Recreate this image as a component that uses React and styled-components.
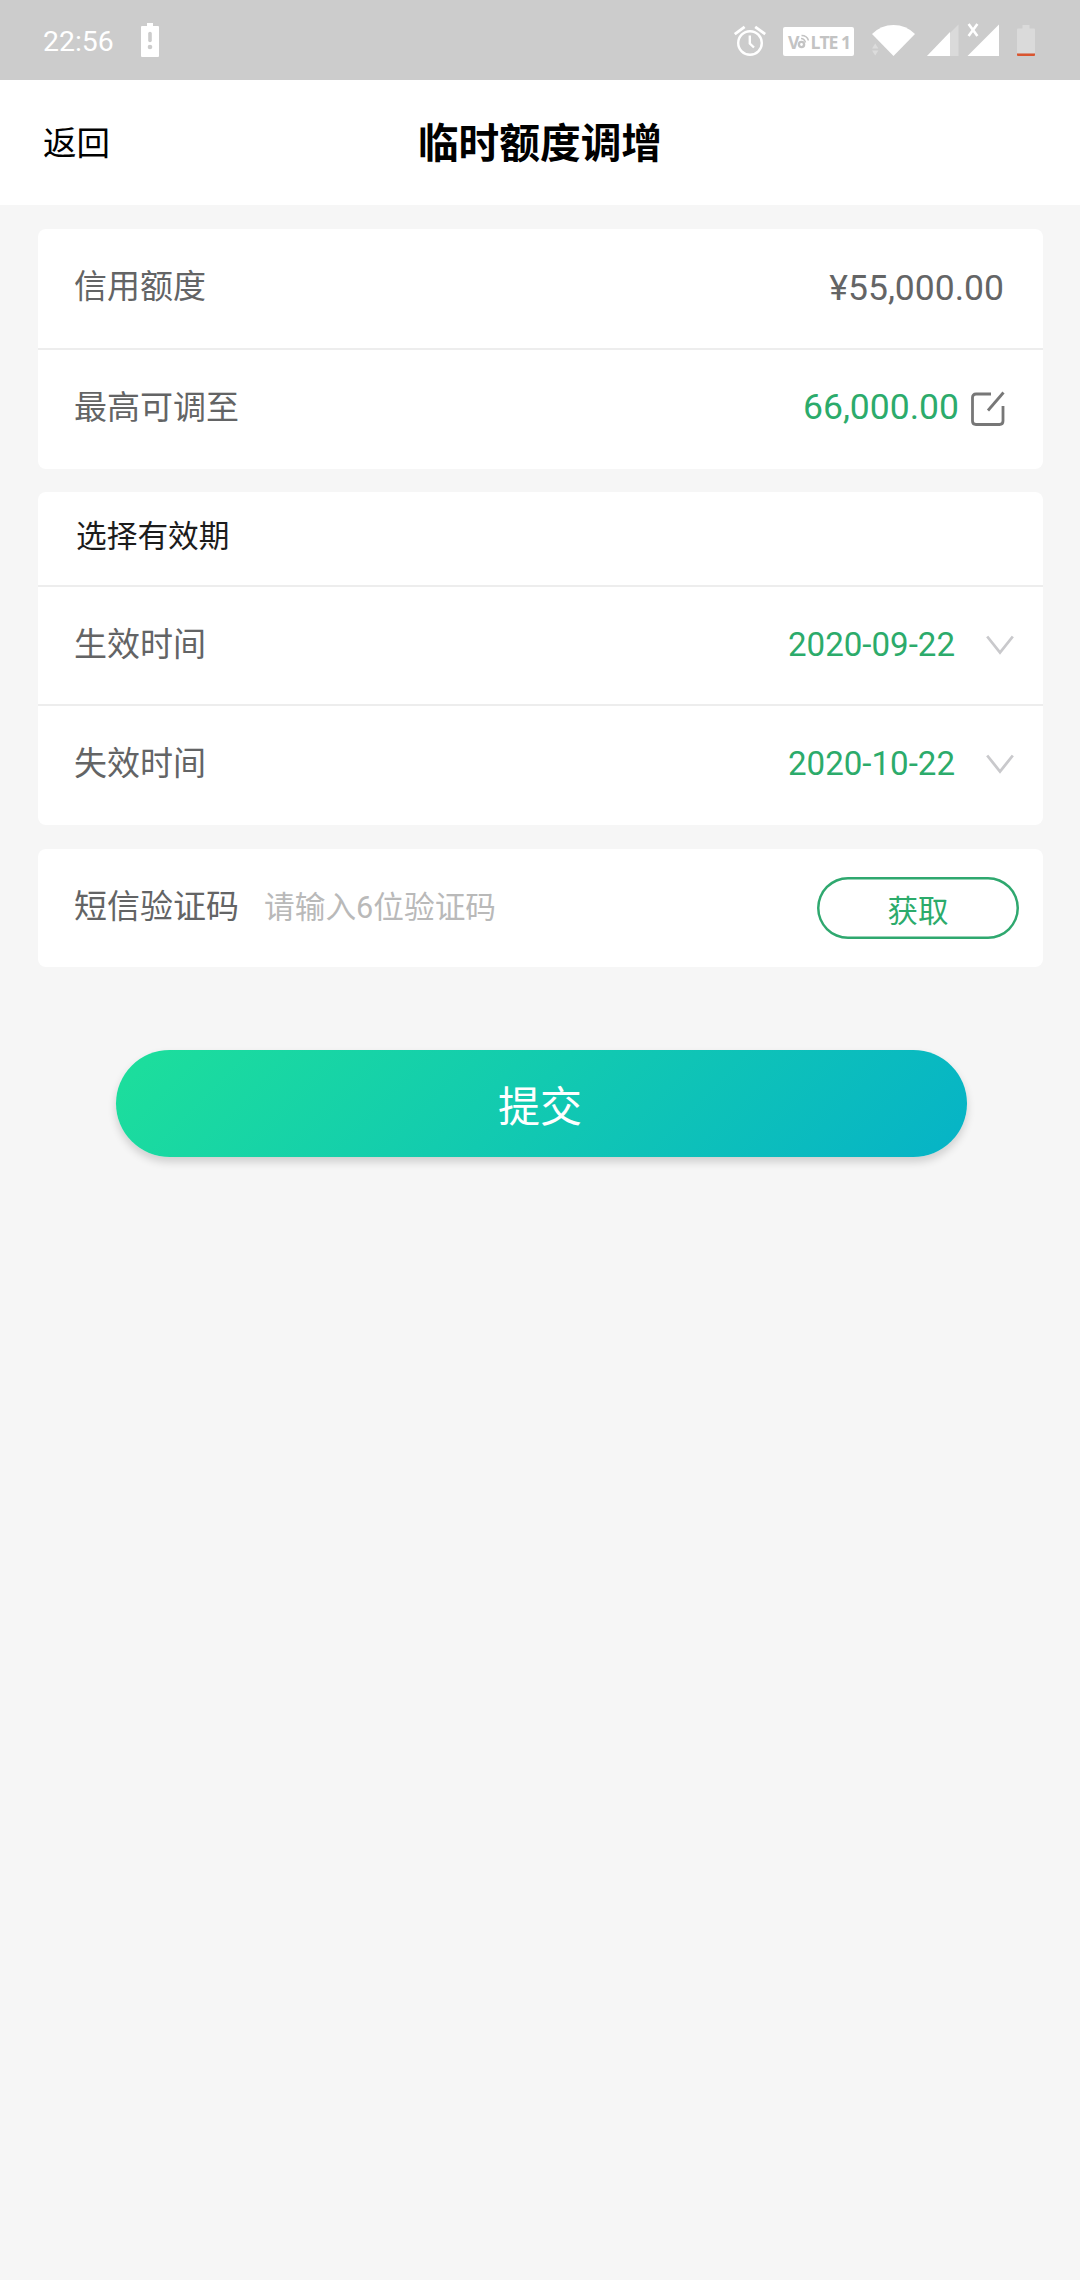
import React from "react";
import styled, { createGlobalStyle } from "styled-components";

const GlobalStyle = createGlobalStyle`
  * { box-sizing: border-box; }
  body {
    margin: 0;
    background: #f6f6f6;
    font-family: Roboto, "Noto Sans CJK SC", sans-serif;
  }
  button, input { font-family: inherit; }
`;

const Screen = styled.div`
  width: 1080px;
  min-height: 2280px;
  background: #f6f6f6;
`;

const StatusBar = styled.div`
  display: flex;
  align-items: flex-start;
  height: 80px;
  padding: 0 45px 0 43px;
  background: #ccc;
  color: #fff;
`;

const Clock = styled.span`
  width: 98px;
  font-size: 28.4px;
  line-height: 84px;
`;

const StatusIcon = styled.svg`
  display: block;
  flex: none;
  width: ${(p) => p.$w}px;
  height: 80px;
  margin-left: ${(p) => p.$gap || 0}px;
`;

const Spacer = styled.div`
  flex: 1;
`;

const VolteBadge = styled.div`
  display: flex;
  flex: none;
  align-items: center;
  width: 71px;
  height: 29px;
  margin: 27px 0 0 17px;
  padding-left: 5px;
  border-radius: 2px;
  background: #fff;
  color: #c3c3c3;
  font: 700 17.6px/30px "Open Sans", sans-serif;
  letter-spacing: -1px;
  white-space: pre;
`;

const VolteMark = styled.svg`
  flex: none;
  width: 13px;
  height: 29px;
  margin-left: -1px;
`;

const Header = styled.header`
  display: grid;
  grid-template-columns: 1fr auto 1fr;
  align-items: center;
  height: 125px;
  padding: 3px 43px 0;
  background: #fff;
  color: #000;
`;

const Back = styled.span`
  font-size: 33.5px;
  line-height: 50px;
`;

const Title = styled.h1`
  margin: 0;
  font-size: 40.7px;
  line-height: 60px;
  font-weight: 700;
`;

const Content = styled.main`
  display: flex;
  flex-direction: column;
  padding: 24px 37px 0 38px;
`;

const Card = styled.section`
  margin-bottom: ${(p) => p.$gap}px;
  border-radius: 8px;
  background: #fff;
`;

const Row = styled.div`
  display: flex;
  align-items: center;
  height: ${(p) => p.$h}px;
  padding: 0 ${(p) => p.$right}px ${(p) => p.$bottom || 0}px 36px;
  border-bottom: ${(p) => (p.$divided ? "2px solid #ededed" : "none")};
`;

const Label = styled.span`
  font-size: 33px;
  line-height: 50px;
  padding-bottom: ${(p) => (p.$lift ? 2 : 0)}px;
  color: #636465;
`;

const SectionTitle = styled.h2`
  margin: 0;
  padding: 0 0 3px 2px;
  font-size: 30.7px;
  line-height: 46px;
  font-weight: 400;
  color: #1c1c1c;
`;

const Value = styled.span`
  margin-left: auto;
  padding-bottom: ${(p) => (p.$lift ? 2 : 0)}px;
  font-size: ${(p) => p.$size}px;
  line-height: 50px;
  color: ${(p) => (p.$green ? "#2cab6b" : "#646566")};
`;

const EditIcon = styled.svg`
  width: 35px;
  height: 36px;
  margin-left: 11px;
`;

const Chevron = styled.svg`
  width: 28px;
  height: 20px;
  margin-left: 31px;
`;

const CodeInput = styled.input`
  flex: 1;
  min-width: 0;
  height: 50px;
  margin: 0 0 2px 25px;
  padding: 0;
  border: 0;
  outline: 0;
  background: transparent;
  font-size: 30.7px;
  &::placeholder { color: #b9b9b9; opacity: 1; }
`;

const GetCode = styled.button`
  width: 202px;
  height: 62px;
  padding: 7px 0 0;
  border: 0;
  border-radius: 31px;
  background: #fff;
  box-shadow: inset 0 0 0 2.5px #2fa86f;
  color: #2cab6b;
  font-size: 30.5px;
  line-height: 44px;
`;

const Submit = styled.button`
  width: 851px;
  height: 107px;
  margin: 83px 0 0 78px;
  padding: 9px 3px 0 0;
  border: 0;
  border-radius: 54px;
  background: linear-gradient(135deg, #1ddf9b, #06b3c7);
  box-shadow: 0 5px 8px rgba(0, 0, 0, 0.16);
  color: #fff;
  font-size: 42px;
  line-height: 60px;
`;

const DateRow = ({ label, value, divided, h }) => (
  <Row $h={h} $right={29} $bottom={divided ? 1 : 3} $divided={divided}>
    <Label>{label}</Label>
    <Value $size={33.1} $green>{value}</Value>
    <Chevron viewBox="0 0 28 20" fill="none" stroke="#c9c9cc" strokeWidth="2.8">
      <path d="M1.200 1.500 14 17.500 26.800 1.500" />
    </Chevron>
  </Row>
);

export default function App() {
  return (
    <Screen>
      <GlobalStyle />
      <StatusBar>
        <Clock>22:56</Clock>
        <StatusIcon $w={18} viewBox="141 0 18 80">
          <path fill="#fff" d="M147 23h6v3h5q1 0 1 1v29q0 1-1 1h-16q-1 0-1-1v-29q0-1 1-1h5z" />
          <path d="M150 33.500v7" stroke="#ccc" strokeWidth="3.600" strokeLinecap="round" />
          <circle cx="150" cy="47" r="2.300" fill="#ccc" />
        </StatusIcon>
        <Spacer />
        <StatusIcon $w={32} viewBox="734 0 32 80" fill="none" stroke="#fff">
          <circle cx="750" cy="43" r="11.800" strokeWidth="2.400" />
          <path d="M734.800 34.200 744.600 26.800M755.200 26.800 765.200 34.200" strokeWidth="2.800" />
          <path d="M749.800 35.500V43.500L754 47.500" strokeWidth="2.400" />
        </StatusIcon>
        <VolteBadge>
          V
          <VolteMark viewBox="0 0 13 29" fill="none" stroke="#c3c3c3">
            <circle cx="4.500" cy="17.500" r="2.600" strokeWidth="2.400" />
            <path d="M4 11.500q3.500.2 4.500 4M4.500 8.500q5.500 0 7 5" strokeWidth="1.500" />
          </VolteMark>
          LTE 1
        </VolteBadge>
        <StatusIcon $w={43} $gap={18} viewBox="872 0 43 80">
          <path fill="#fff" d="M893.500 56 872 34Q881 25 893.500 25T915 34z" />
          <path fill="#dcdcdc" d="M872 48.500 875.200 43.500 878.400 48.500zM872 50.500h6.400L875.200 55.500z" />
        </StatusIcon>
        <StatusIcon $w={32} $gap={12} viewBox="927 0 32 80">
          <path fill="#dadada" d="M927 56 958.500 24.500V56z" />
          <path fill="#fff" d="M927 56 950 32V56z" />
        </StatusIcon>
        <StatusIcon $w={32} $gap={8} viewBox="967 0 32 80">
          <path fill="#fff" d="M967.500 56 999 24.500V56z" />
          <path d="M968.600 24 977.400 36M977.400 24 968.600 36" stroke="#fff" strokeWidth="2.600" />
        </StatusIcon>
        <StatusIcon $w={18} $gap={18} viewBox="1017 0 18 80">
          <path fill="#dadada" d="M1022.500 25h7v3.500h4.500q1 0 1 1V53.500h-18V29.500q0-1 1-1h4.500z" />
          <path fill="#d9552f" d="M1017 53.500h18v1.500q0 1-1 1h-16q-1 0-1-1z" />
        </StatusIcon>
      </StatusBar>
      <Header>
        <Back>返回</Back>
        <Title>临时额度调增</Title>
      </Header>
      <Content>
        <Card $gap={23}>
          <Row $h={121} $right={39} $bottom={1} $divided>
            <Label $lift>信用额度</Label>
            <Value $size={35.5}>¥55,000.00</Value>
          </Row>
          <Row $h={119} $right={38} $bottom={4}>
            <Label>最高可调至</Label>
            <Value $size={35.5} $green $lift>66,000.00</Value>
            <EditIcon viewBox="0 0 35 36" fill="none" stroke="#777" strokeWidth="2.800">
              <path d="M21 4H6Q2.500 4 2.500 7.500V31Q2.500 34.500 6 34.500H29.500Q33 34.500 33 31V16" />
              <path d="M18 20.500 33.500 2.500" />
            </EditIcon>
          </Row>
        </Card>
        <Card $gap={24}>
          <Row $h={95} $right={38} $divided>
            <SectionTitle>选择有效期</SectionTitle>
          </Row>
          <DateRow h={119} label="生效时间" value="2020-09-22" divided />
          <DateRow h={119} label="失效时间" value="2020-10-22" />
        </Card>
        <Card>
          <Row $h={118} $right={24}>
            <Label $lift>短信验证码</Label>
            <CodeInput placeholder="请输入6位验证码" />
            <GetCode>获取</GetCode>
          </Row>
        </Card>
        <Submit>提交</Submit>
      </Content>
    </Screen>
  );
}
